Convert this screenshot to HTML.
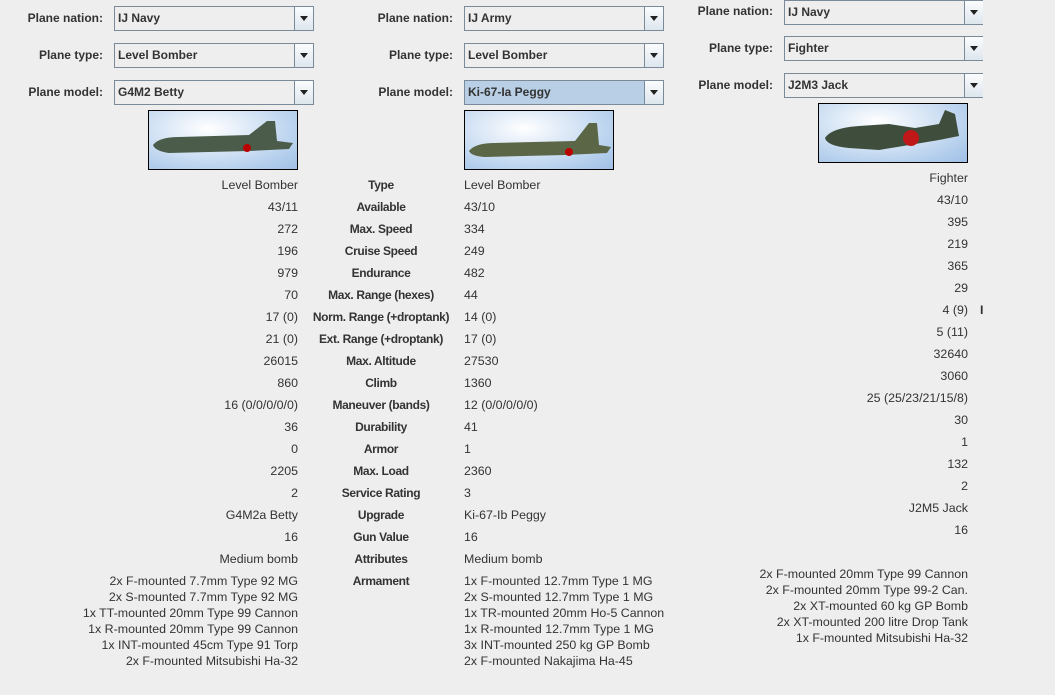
<!DOCTYPE html>
<html><head><meta charset="utf-8"><style>
body{margin:0;width:1055px;height:695px;background:#eeeeee;font-family:"Liberation Sans",Arial,sans-serif;font-size:12.4px;color:#333;position:relative;overflow:hidden}
.a{position:absolute;white-space:nowrap;line-height:14px}
.l{font-weight:bold;color:#333;text-align:right;font-size:12px}
.r{text-align:right}
.c{text-align:center;font-weight:bold;font-size:12px;letter-spacing:-0.35px}
.cb{position:absolute;height:23px;width:198px;border:1px solid #7a8a99;background:#eeeeee;box-sizing:content-box}
.cb span{position:absolute;left:3px;top:4px;font-weight:bold;color:#333;font-size:12px}
.cb i{position:absolute;right:0;top:0;width:18px;height:23px;border-left:1px solid #7a8a99;background:linear-gradient(#fbfcfd,#dde6ee)}
.cb i:after{content:"";position:absolute;left:5px;top:9px;border-left:4px solid transparent;border-right:4px solid transparent;border-top:5px solid #222}
.img{position:absolute;width:148px;height:58px;border:1px solid #000;background:radial-gradient(ellipse at 40% 30%,#fff,#b9d2ee 70%,#9fc0e6);overflow:hidden}
</style></head><body>
<div class="a l" style="left:0;width:103px;top:11px">Plane nation:</div>
<div class="a l" style="left:0;width:103px;top:48px">Plane type:</div>
<div class="a l" style="left:0;width:103px;top:85px">Plane model:</div>
<div class="cb" style="left:114px;top:6px"><span>IJ Navy</span><i></i></div>
<div class="cb" style="left:114px;top:43px"><span>Level Bomber</span><i></i></div>
<div class="cb" style="left:114px;top:80px"><span>G4M2 Betty</span><i></i></div>
<div class="a l" style="left:350px;width:103px;top:11px">Plane nation:</div>
<div class="a l" style="left:350px;width:103px;top:48px">Plane type:</div>
<div class="a l" style="left:350px;width:103px;top:85px">Plane model:</div>
<div class="cb" style="left:464px;top:6px"><span>IJ Army</span><i></i></div>
<div class="cb" style="left:464px;top:43px"><span>Level Bomber</span><i></i></div>
<div class="cb" style="left:464px;top:80px;background:#b8cfe5"><span>Ki-67-Ia Peggy</span><i></i></div>
<div class="a l" style="left:670px;width:103px;top:4px">Plane nation:</div>
<div class="a l" style="left:670px;width:103px;top:41px">Plane type:</div>
<div class="a l" style="left:670px;width:103px;top:78px">Plane model:</div>
<div class="cb" style="left:784px;top:0px"><span>IJ Navy</span><i></i></div>
<div class="cb" style="left:784px;top:36px"><span>Fighter</span><i></i></div>
<div class="cb" style="left:784px;top:73px"><span>J2M3 Jack</span><i></i></div>
<div style="position:absolute;left:983px;top:0;width:72px;height:110px;background:#eeeeee"></div>
<div class="img" style="left:148px;top:110px"><svg width="148" height="58"><path d="M4 34 Q10 26 30 26 L100 24 L118 10 L126 10 L128 30 L144 32 L140 38 L100 40 L20 42 Q6 40 4 34Z" fill="#4b5c4a"/><circle cx="98" cy="37" r="4" fill="#b00"/></svg></div>
<div class="img" style="left:464px;top:110px"><svg width="148" height="58"><path d="M4 40 Q10 32 30 32 L110 30 L124 12 L132 12 L134 34 L146 36 L142 42 L100 44 L20 46 Q6 45 4 40Z" fill="#5b6647"/><circle cx="104" cy="41" r="4" fill="#b00"/></svg></div>
<div class="img" style="left:818px;top:103px"><svg width="148" height="58"><path d="M6 34 Q12 24 40 22 L70 20 L96 24 L120 20 L126 6 L136 10 L140 32 L120 36 L60 46 L30 44 Q8 42 6 34Z" fill="#3f4e3c"/><circle cx="92" cy="34" r="8" fill="#c01818"/></svg></div>
<div style="position:absolute;left:0;top:178px">
<div class="a r" style="left:100px;width:198px;top:0">Level Bomber</div>
<div class="a r" style="left:100px;width:198px;top:22px">43/11</div>
<div class="a r" style="left:100px;width:198px;top:44px">272</div>
<div class="a r" style="left:100px;width:198px;top:66px">196</div>
<div class="a r" style="left:100px;width:198px;top:88px">979</div>
<div class="a r" style="left:100px;width:198px;top:110px">70</div>
<div class="a r" style="left:100px;width:198px;top:132px">17 (0)</div>
<div class="a r" style="left:100px;width:198px;top:154px">21 (0)</div>
<div class="a r" style="left:100px;width:198px;top:176px">26015</div>
<div class="a r" style="left:100px;width:198px;top:198px">860</div>
<div class="a r" style="left:100px;width:198px;top:220px">16 (0/0/0/0/0)</div>
<div class="a r" style="left:100px;width:198px;top:242px">36</div>
<div class="a r" style="left:100px;width:198px;top:264px">0</div>
<div class="a r" style="left:100px;width:198px;top:286px">2205</div>
<div class="a r" style="left:100px;width:198px;top:308px">2</div>
<div class="a r" style="left:100px;width:198px;top:330px">G4M2a Betty</div>
<div class="a r" style="left:100px;width:198px;top:352px">16</div>
<div class="a r" style="left:100px;width:198px;top:374px">Medium bomb</div>
<div class="a r" style="left:0;width:298px;top:395px;line-height:16px">2x F-mounted 7.7mm Type 92 MG<br>2x S-mounted 7.7mm Type 92 MG<br>1x TT-mounted 20mm Type 99 Cannon<br>1x R-mounted 20mm Type 99 Cannon<br>1x INT-mounted 45cm Type 91 Torp<br>2x F-mounted Mitsubishi Ha-32</div>
<div class="a c" style="left:301px;width:160px;top:0">Type</div>
<div class="a c" style="left:301px;width:160px;top:22px">Available</div>
<div class="a c" style="left:301px;width:160px;top:44px">Max. Speed</div>
<div class="a c" style="left:301px;width:160px;top:66px">Cruise Speed</div>
<div class="a c" style="left:301px;width:160px;top:88px">Endurance</div>
<div class="a c" style="left:301px;width:160px;top:110px">Max. Range (hexes)</div>
<div class="a c" style="left:301px;width:160px;top:132px">Norm. Range (+droptank)</div>
<div class="a c" style="left:301px;width:160px;top:154px">Ext. Range (+droptank)</div>
<div class="a c" style="left:301px;width:160px;top:176px">Max. Altitude</div>
<div class="a c" style="left:301px;width:160px;top:198px">Climb</div>
<div class="a c" style="left:301px;width:160px;top:220px">Maneuver (bands)</div>
<div class="a c" style="left:301px;width:160px;top:242px">Durability</div>
<div class="a c" style="left:301px;width:160px;top:264px">Armor</div>
<div class="a c" style="left:301px;width:160px;top:286px">Max. Load</div>
<div class="a c" style="left:301px;width:160px;top:308px">Service Rating</div>
<div class="a c" style="left:301px;width:160px;top:330px">Upgrade</div>
<div class="a c" style="left:301px;width:160px;top:352px">Gun Value</div>
<div class="a c" style="left:301px;width:160px;top:374px">Attributes</div>
<div class="a c" style="left:301px;width:160px;top:396px">Armament</div>
<div class="a" style="left:464px;top:0">Level Bomber</div>
<div class="a" style="left:464px;top:22px">43/10</div>
<div class="a" style="left:464px;top:44px">334</div>
<div class="a" style="left:464px;top:66px">249</div>
<div class="a" style="left:464px;top:88px">482</div>
<div class="a" style="left:464px;top:110px">44</div>
<div class="a" style="left:464px;top:132px">14 (0)</div>
<div class="a" style="left:464px;top:154px">17 (0)</div>
<div class="a" style="left:464px;top:176px">27530</div>
<div class="a" style="left:464px;top:198px">1360</div>
<div class="a" style="left:464px;top:220px">12 (0/0/0/0/0)</div>
<div class="a" style="left:464px;top:242px">41</div>
<div class="a" style="left:464px;top:264px">1</div>
<div class="a" style="left:464px;top:286px">2360</div>
<div class="a" style="left:464px;top:308px">3</div>
<div class="a" style="left:464px;top:330px">Ki-67-Ib Peggy</div>
<div class="a" style="left:464px;top:352px">16</div>
<div class="a" style="left:464px;top:374px">Medium bomb</div>
<div class="a" style="left:464px;top:395px;line-height:16px">1x F-mounted 12.7mm Type 1 MG<br>2x S-mounted 12.7mm Type 1 MG<br>1x TR-mounted 20mm Ho-5 Cannon<br>1x R-mounted 12.7mm Type 1 MG<br>3x INT-mounted 250 kg GP Bomb<br>2x F-mounted Nakajima Ha-45</div>
</div>
<div style="position:absolute;left:0;top:171px">
<div class="a r" style="left:700px;width:268px;top:0">Fighter</div>
<div class="a r" style="left:700px;width:268px;top:22px">43/10</div>
<div class="a r" style="left:700px;width:268px;top:44px">395</div>
<div class="a r" style="left:700px;width:268px;top:66px">219</div>
<div class="a r" style="left:700px;width:268px;top:88px">365</div>
<div class="a r" style="left:700px;width:268px;top:110px">29</div>
<div class="a r" style="left:700px;width:268px;top:132px">4 (9)</div>
<div class="a" style="left:980px;top:132px;font-weight:bold">I</div>
<div class="a r" style="left:700px;width:268px;top:154px">5 (11)</div>
<div class="a r" style="left:700px;width:268px;top:176px">32640</div>
<div class="a r" style="left:700px;width:268px;top:198px">3060</div>
<div class="a r" style="left:700px;width:268px;top:220px">25 (25/23/21/15/8)</div>
<div class="a r" style="left:700px;width:268px;top:242px">30</div>
<div class="a r" style="left:700px;width:268px;top:264px">1</div>
<div class="a r" style="left:700px;width:268px;top:286px">132</div>
<div class="a r" style="left:700px;width:268px;top:308px">2</div>
<div class="a r" style="left:700px;width:268px;top:330px">J2M5 Jack</div>
<div class="a r" style="left:700px;width:268px;top:352px">16</div>
<div class="a r" style="left:600px;width:368px;top:395px;line-height:16px">2x F-mounted 20mm Type 99 Cannon<br>2x F-mounted 20mm Type 99-2 Can.<br>2x XT-mounted 60 kg GP Bomb<br>2x XT-mounted 200 litre Drop Tank<br>1x F-mounted Mitsubishi Ha-32</div>
</div>
</body></html>
